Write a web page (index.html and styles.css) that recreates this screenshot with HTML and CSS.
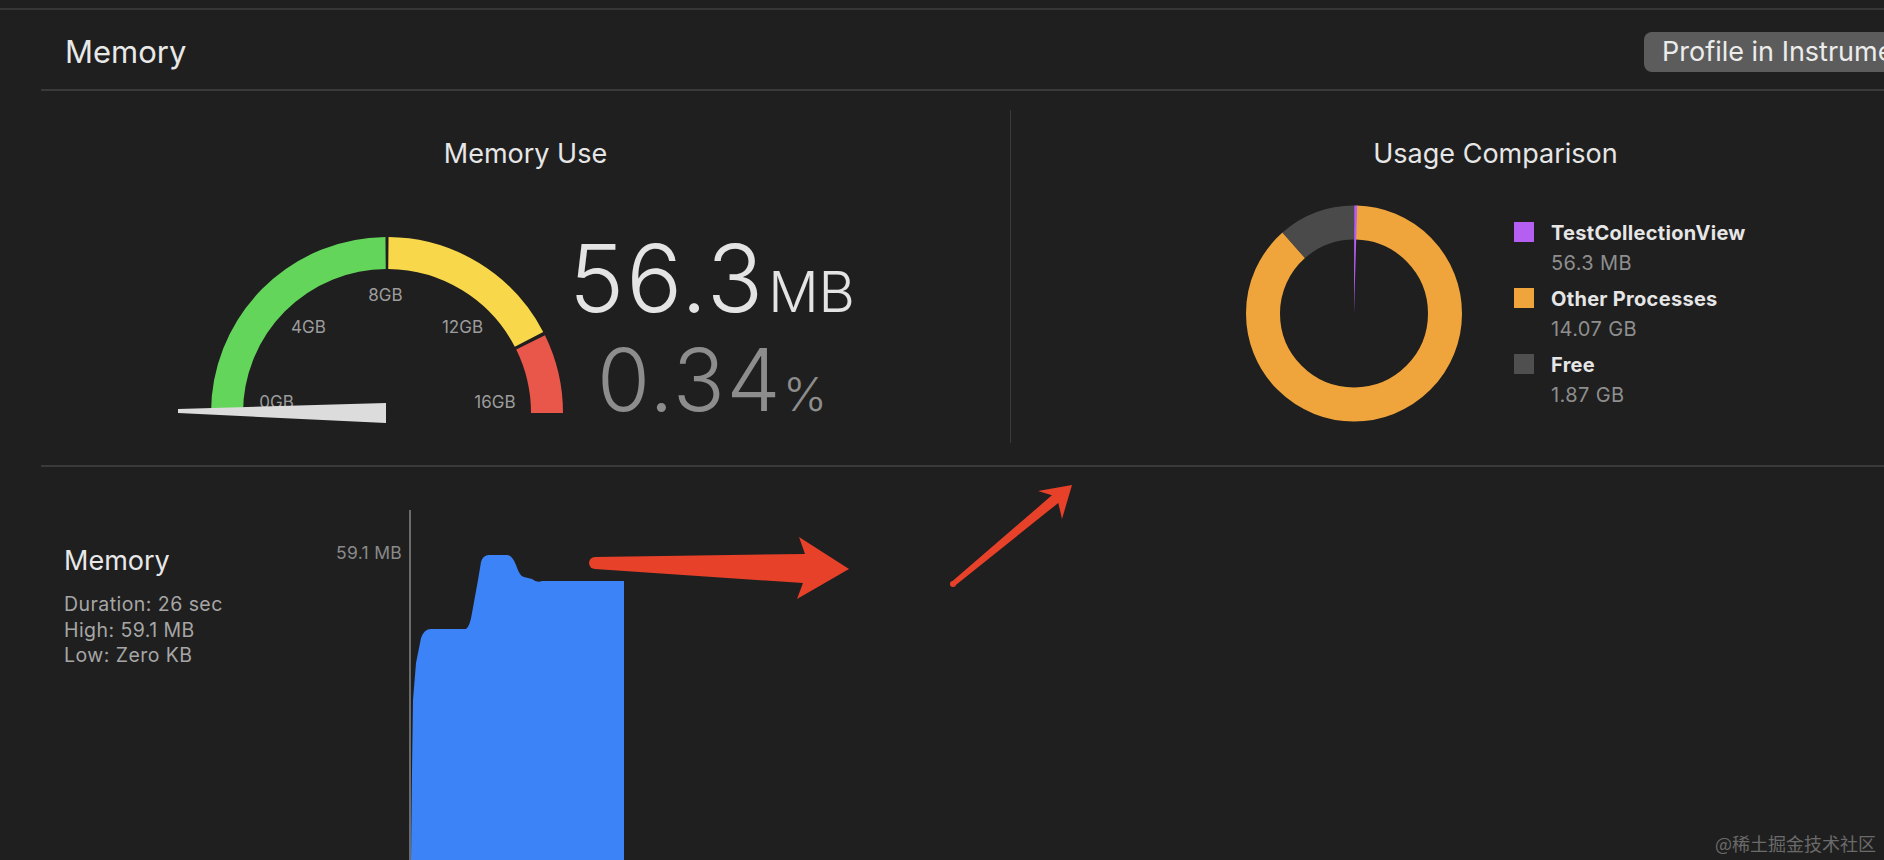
FILE: index.html
```html
<!DOCTYPE html>
<html lang="en">
<head>
<meta charset="utf-8">
<title>Memory</title>
<link rel="stylesheet" href="styles.css">
</head>
<body>
<div class="topbar"></div>
<div class="page">
  <header class="header">
    <h1 class="title">Memory</h1>
    <button class="btn">Profile in Instruments</button>
  </header>

  <section class="overview">
    <div class="panel panel-use">
      <h2 class="panel-title">Memory Use</h2>
      <div class="use-row">
        <svg class="gauge" width="396" height="200" viewBox="0 0 396 200">
          <path d="M 57 183 A 160 160 0 0 1 215.6 23" fill="none" stroke="#64d55b" stroke-width="32"/>
          <path d="M 218.4 23 A 160 160 0 0 1 359 109.4" fill="none" stroke="#f8d84a" stroke-width="32"/>
          <path d="M 360.6 112.4 A 160 160 0 0 1 377 183" fill="none" stroke="#e9564a" stroke-width="32"/>
          <g class="gauge-labels">
            <text x="106.5" y="172">0GB</text>
            <text x="138.5" y="97">4GB</text>
            <text x="215.5" y="65">8GB</text>
            <text x="292.5" y="97">12GB</text>
            <text x="325" y="172">16GB</text>
          </g>
          <polygon points="8,179 216,173 216,193 8,183" fill="#dcdcdc"/>
        </svg>
        <div class="readout">
          <div class="readout-main">56.3<span class="unit">MB</span></div>
          <div class="readout-sub">0.34<span class="unit-pct">%</span></div>
        </div>
      </div>
    </div>

    <div class="divider"></div>

    <div class="panel panel-cmp">
      <h2 class="panel-title">Usage Comparison</h2>
      <div class="cmp-row">
        <svg class="donut" width="230" height="230" viewBox="0 0 230 230">
          <circle cx="114" cy="114.5" r="91" fill="none" stroke="#f0a53c" stroke-width="34"
                  stroke-dasharray="503 571.77" stroke-dashoffset="-2.06" transform="rotate(-90 114 114.5)"/>
          <circle cx="114" cy="114.5" r="91" fill="none" stroke="#4a4a4a" stroke-width="34"
                  stroke-dasharray="66.7 571.77" stroke-dashoffset="-505.07" transform="rotate(-90 114 114.5)"/>
          <polygon points="114,114.5 114.2,6.5 117.2,6.6" fill="#b45ef2"/>
        </svg>
        <ul class="legend">
          <li class="legend-item">
            <span class="swatch swatch-app"></span>
            <div class="legend-text">
              <div class="legend-name">TestCollectionView</div>
              <div class="legend-value">56.3 MB</div>
            </div>
          </li>
          <li class="legend-item">
            <span class="swatch swatch-other"></span>
            <div class="legend-text">
              <div class="legend-name">Other Processes</div>
              <div class="legend-value">14.07 GB</div>
            </div>
          </li>
          <li class="legend-item">
            <span class="swatch swatch-free"></span>
            <div class="legend-text">
              <div class="legend-name">Free</div>
              <div class="legend-value">1.87 GB</div>
            </div>
          </li>
        </ul>
      </div>
    </div>
  </section>

  <section class="timeline">
    <div class="info">
      <div class="info-text">
        <h3 class="info-title">Memory</h3>
        <p class="info-line">Duration: 26 sec</p>
        <p class="info-line">High: 59.1 MB</p>
        <p class="info-line">Low: Zero KB</p>
      </div>
      <div class="axis-label">59.1 MB</div>
    </div>
    <div class="plot">
      <svg class="plot-svg" width="400" height="350" viewBox="0 0 400 350">
        <path d="M 0 350 L 1 260 L 2 190 L 5 153 L 10 128 Q 13 119 20 119 L 55 119 Q 59 116 61 103 L 67 70 L 70 52 Q 72 45 78 45 L 96 45 Q 101 45 105 55 Q 109 67 113 67 L 121 69 Q 126 73 131 71 L 213 71 L 213 350 Z" fill="#3b83f6"/>
      </svg>
    </div>
  </section>
</div>

<svg class="annotations" width="1884" height="860" viewBox="0 0 1884 860">
  <circle cx="595" cy="563" r="6" fill="#e8412a"/>
  <polygon points="595,557 805,554 799,537 849,569 797,599 803,583 595,569" fill="#e8412a"/>
  <circle cx="953" cy="584" r="3" fill="#e8412a"/>
  <polygon points="954.6,585.9 1058.3,502.9 1062,519 1072,485 1038,491 1051.9,495.3 951.4,582.1" fill="#e8412a"/>
</svg>
<div class="watermark">@稀土掘金技术社区</div>
</body>
</html>
```

FILE: styles.css
```css
* {
  box-sizing: border-box;
}

html, body {
  margin: 0;
  padding: 0;
}

body {
  position: relative;
  width: 1884px;
  height: 860px;
  overflow: hidden;
  background: #1f1f1f;
  color: #e6e6e6;
  font-family: Inter, "Noto Sans", sans-serif;
}

.topbar {
  height: 10px;
  border-bottom: 2px solid #363636;
}

.page {
  margin-left: 41px;
  width: 1939px;
}

/* Header */
.header {
  display: flex;
  align-items: center;
  height: 81px;
  padding-top: 4px;
  padding-right: 6px;
  border-bottom: 2px solid #3a3a3a;
}

.title {
  margin: 0;
  padding-left: 24px;
  font-size: 31px;
  line-height: 31px;
  font-weight: 400;
  color: #e8e8e8;
}

.btn {
  margin-left: auto;
  width: 330px;
  height: 40px;
  padding: 0 0 0 18px;
  border: none;
  border-radius: 8px;
  background: #5c5c5c;
  color: #ececec;
  font-family: Inter, "Noto Sans", sans-serif;
  font-size: 27px;
  text-align: left;
  white-space: nowrap;
}

/* Overview */
.overview {
  display: grid;
  grid-template-columns: 969px 1px 969px;
  height: 376px;
  border-bottom: 2px solid #3a3a3a;
}

.divider {
  background: #3a3a3a;
  margin: 19px 0 22px;
}

.panel {
  padding-top: 46px;
}

.panel-title {
  margin: 0;
  text-align: center;
  font-size: 27px;
  line-height: 34px;
  font-weight: 400;
  color: #e6e6e6;
}

.use-row {
  display: flex;
  align-items: flex-start;
  margin-top: 59px;
  padding-left: 129px;
}

.gauge {
  display: block;
  flex: none;
}

.gauge-labels text {
  font-family: Inter, "Noto Sans", sans-serif;
  font-size: 17px;
  fill: #9c9c9c;
  text-anchor: middle;
  dominant-baseline: central;
}

.readout {
  width: 290px;
  margin-left: 1px;
  margin-top: 2px;
  text-align: center;
  font-weight: 300;
}

.readout-main {
  font-size: 93px;
  line-height: 92px;
  color: #e4e4e4;
  letter-spacing: 2px;
}

.unit {
  font-size: 56px;
  margin-left: 3px;
  letter-spacing: 0;
}

.readout-sub {
  margin-top: -1px;
  font-size: 86px;
  line-height: 86px;
  color: #8d8d8d;
  letter-spacing: 1.5px;
}

.unit-pct {
  font-size: 47px;
  margin-left: 1px;
  letter-spacing: 0;
}

/* Comparison */
.cmp-row {
  display: flex;
  align-items: flex-start;
  margin-top: 28px;
  padding-left: 229px;
}

.donut {
  display: block;
  flex: none;
}

.legend {
  list-style: none;
  margin: 21px 0 0 44px;
  padding: 0;
}

.legend-item {
  display: flex;
  align-items: flex-start;
  gap: 17px;
  margin-bottom: 6px;
}

.swatch {
  width: 20px;
  height: 20px;
  margin-top: 2px;
  flex: none;
}

.swatch-app { background: #b45ef2; }
.swatch-other { background: #f0a53c; }
.swatch-free { background: #4f4f4f; }

.legend-name {
  font-size: 20px;
  line-height: 26px;
  font-weight: 700;
  letter-spacing: 0.3px;
  color: #e6e6e6;
}

.legend-value {
  font-size: 20px;
  line-height: 34px;
  letter-spacing: 0.4px;
  color: #8e8e8e;
}

/* Timeline */
.timeline {
  display: flex;
  height: 393px;
}

.info {
  display: flex;
  width: 368px;
  flex: none;
}

.info-text {
  padding-left: 23px;
  padding-top: 77px;
  flex: 1;
}

.info-title {
  margin: 0;
  font-size: 27px;
  line-height: 34px;
  font-weight: 400;
  color: #e8e8e8;
}

.info-line {
  margin: 0;
  font-size: 19.5px;
  line-height: 25.5px;
  letter-spacing: 0.45px;
  color: #a6a6a6;
}

.info-title + .info-line {
  margin-top: 14px;
}

.axis-label {
  padding-top: 76px;
  padding-right: 7px;
  font-size: 17.5px;
  line-height: 20px;
  letter-spacing: 0.3px;
  color: #8a8a8a;
  white-space: nowrap;
}

.plot {
  margin-top: 43px;
  border-left: 2px solid #6b6b6b;
  flex: 1;
}

.plot-svg {
  display: block;
}

/* Overlays */
.annotations {
  position: absolute;
  top: 0;
  left: 0;
  pointer-events: none;
}

.watermark {
  position: absolute;
  right: 8px;
  bottom: 6px;
  font-family: "Noto Sans CJK SC", sans-serif;
  font-size: 18px;
  line-height: 22px;
  color: #6a6a6a;
}
```
